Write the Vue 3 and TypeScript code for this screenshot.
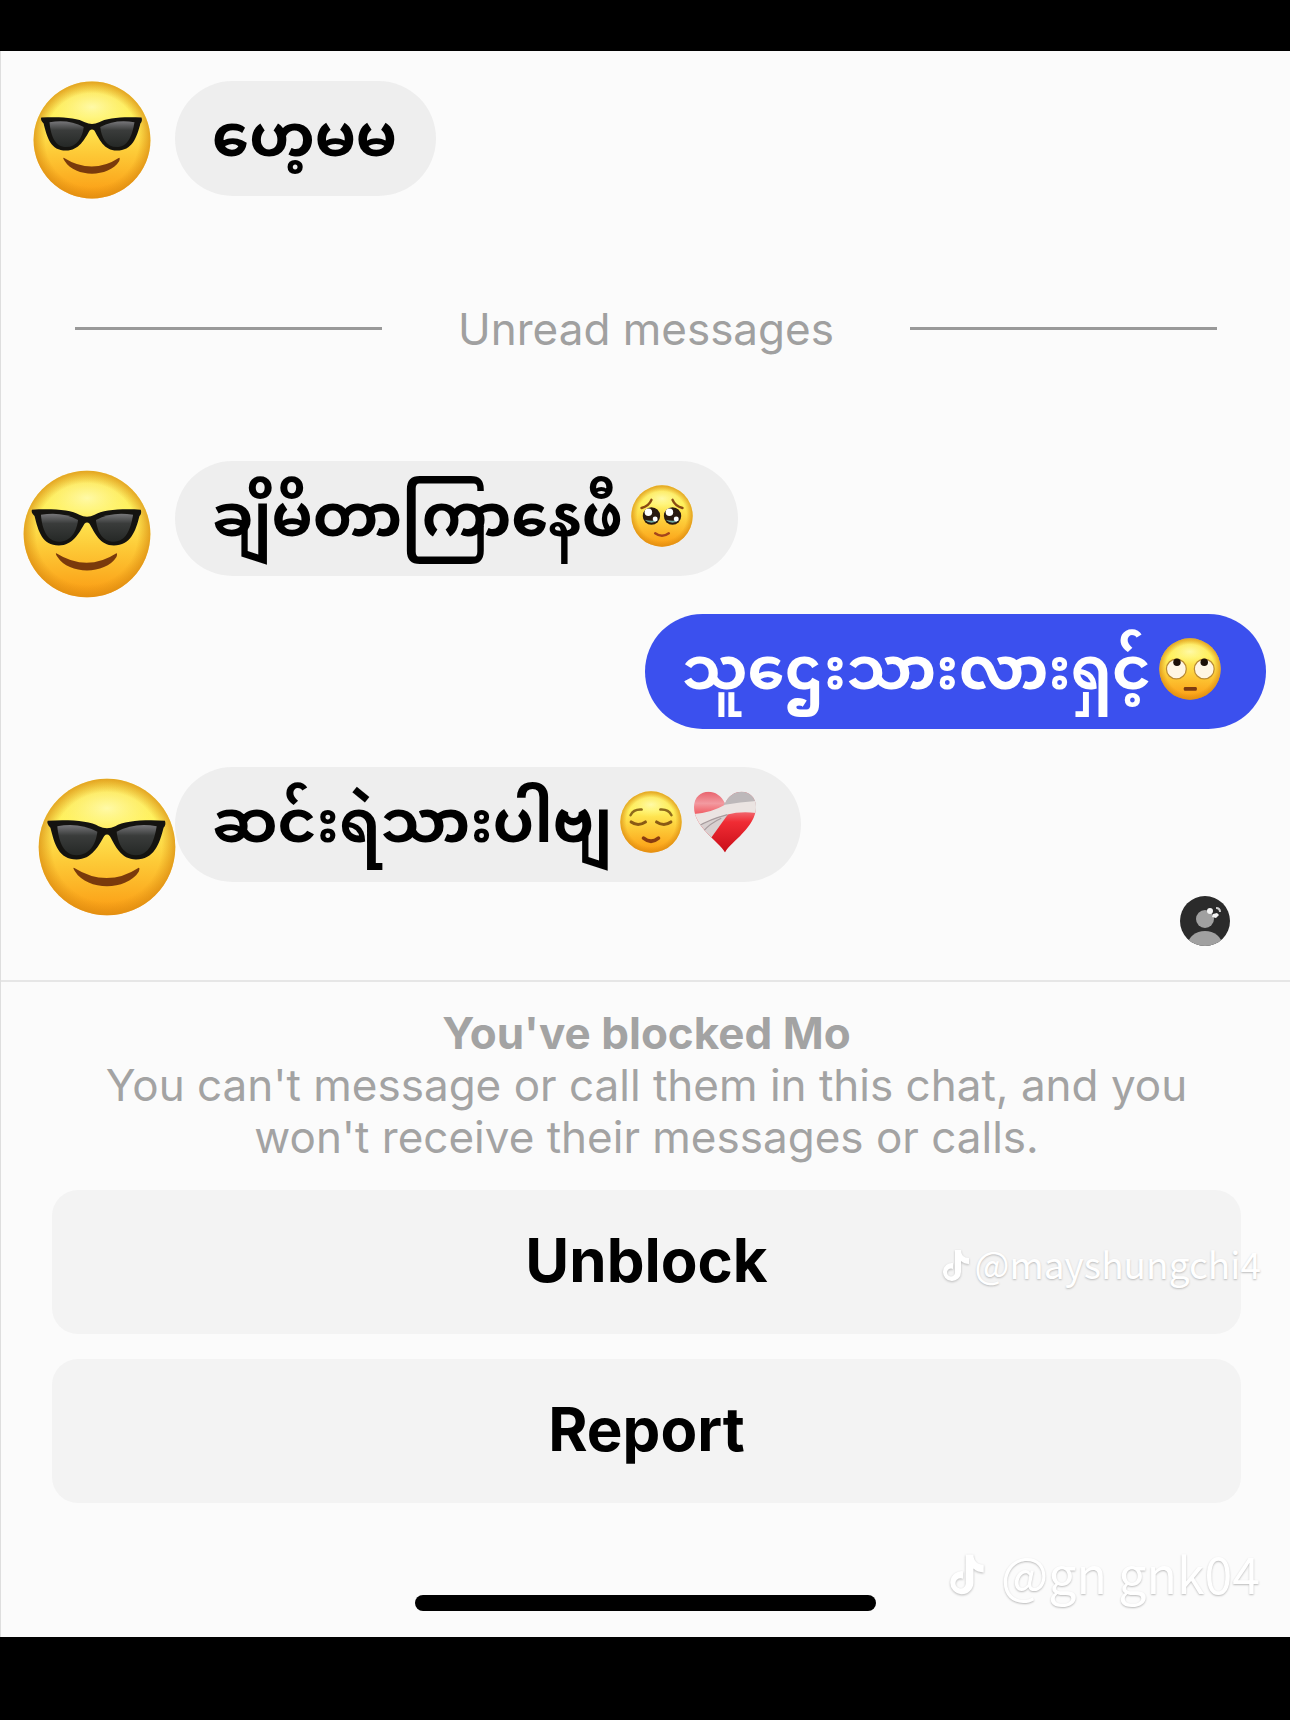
<script setup lang="ts">
type EmojiName = 'pleading' | 'eyeroll' | 'relieved' | 'heart'

interface Message {
  id: number
  text: string
  mine: boolean
  avatar?: 'small' | 'medium' | 'large'
  emojis: EmojiName[]
}

const readMessages: Message[] = [
  { id: 1, text: 'ဟေ့မမ', mine: false, avatar: 'small', emojis: [] },
]

const unreadMessages: Message[] = [
  { id: 2, text: 'ချိမိတာကြာနေဖီ', mine: false, avatar: 'medium', emojis: ['pleading'] },
  { id: 3, text: 'သူဌေးသားလားရှင့်', mine: true, emojis: ['eyeroll'] },
  { id: 4, text: 'ဆင်းရဲသားပါဗျ', mine: false, avatar: 'large', emojis: ['relieved', 'heart'] },
]

const groups = [
  { key: 'read', messages: readMessages },
  { key: 'unread', messages: unreadMessages },
]
</script>

<template>
  <div class="page">
    <svg class="defs" width="0" height="0" aria-hidden="true">
      <defs>
        <linearGradient id="skin" x1="0" y1="0" x2="0" y2="1">
          <stop offset="0" stop-color="#fbe04a" />
          <stop offset="0.3" stop-color="#fff25e" />
          <stop offset="0.6" stop-color="#fdcb38" />
          <stop offset="1" stop-color="#fb9a12" />
        </linearGradient>
        <radialGradient id="rim" cx="0.5" cy="0.5" r="0.5">
          <stop offset="0.8" stop-color="#d98a10" stop-opacity="0" />
          <stop offset="1" stop-color="#d98a10" stop-opacity="0.7" />
        </radialGradient>
        <radialGradient id="shine" cx="0.5" cy="0.5" r="0.5">
          <stop offset="0" stop-color="#fffbb0" stop-opacity="0.9" />
          <stop offset="1" stop-color="#fff68a" stop-opacity="0" />
        </radialGradient>
        <linearGradient id="lens" x1="0" y1="0" x2="0" y2="1">
          <stop offset="0" stop-color="#77777a" />
          <stop offset="0.35" stop-color="#3a3c3b" />
          <stop offset="1" stop-color="#252826" />
        </linearGradient>
        <linearGradient id="red" x1="0" y1="0" x2="0" y2="1">
          <stop offset="0" stop-color="#e8606a" />
          <stop offset="0.2" stop-color="#f29aa0" />
          <stop offset="0.5" stop-color="#f02c34" />
          <stop offset="1" stop-color="#c80d18" />
        </linearGradient>
        <symbol id="face" viewBox="0 0 100 100">
          <circle cx="50" cy="50" r="49.5" fill="url(#skin)" />
          <ellipse cx="50" cy="22" rx="36" ry="20" fill="url(#shine)" />
          <circle cx="50" cy="50" r="49.5" fill="url(#rim)" />
        </symbol>
        <symbol id="cool" viewBox="0 0 100 100">
          <use href="#face" />
          <path d="M7 31 C22 30 38 31 44 35 Q50 38 56 35 C62 31 78 30 92 31 Q93 34 91 36 C88 48 84 59 71 59 C60 59 56 49 52 42 Q50 40 48 42 C44 49 39 59 28 59 C15 59 12 48 9 36 Q6 33 7 31Z" fill="#141310" />
          <path d="M14 35 Q30 32 43 39 C42 48 37 56 28 56 C19 56 15 47 14 35Z" fill="url(#lens)" />
          <path d="M86 35 Q70 32 57 39 C58 48 62 56 71 56 C80 56 84 47 86 35Z" fill="url(#lens)" />
          <path d="M26 65 Q50 80 73 65 Q74 65 73 68 C64 82 36 82 27 68Q25 65 26 65Z" fill="#7a3a0c" />
        </symbol>
        <symbol id="pleading" viewBox="0 0 100 100">
          <use href="#face" />
          <path d="M17 37 Q29 34 33 24 M83 37 Q71 34 67 24" fill="none" stroke="#8a4a12" stroke-width="4" stroke-linecap="round" />
          <circle cx="33" cy="50" r="14" fill="#2a1a10" />
          <circle cx="67" cy="50" r="14" fill="#2a1a10" />
          <path d="M22 56 Q33 66 44 56 Q33 59 22 56Z M56 56 Q67 66 78 56 Q67 59 56 56Z" fill="#6fa8a0" />
          <circle cx="28" cy="44" r="6" fill="#fff" />
          <circle cx="62" cy="44" r="6" fill="#fff" />
          <circle cx="39" cy="55" r="4" fill="#fff" />
          <circle cx="73" cy="55" r="4" fill="#fff" />
          <path d="M39 78 Q50 86 61 78" fill="none" stroke="#a4441c" stroke-width="4" stroke-linecap="round" />
        </symbol>
        <symbol id="eyeroll" viewBox="0 0 100 100">
          <use href="#face" />
          <circle cx="28" cy="50" r="16" fill="#fff6e4" stroke="#b98a34" stroke-width="2" />
          <circle cx="73" cy="50" r="16" fill="#fff6e4" stroke="#b98a34" stroke-width="2" />
          <circle cx="29" cy="39" r="6" fill="#1c1008" />
          <circle cx="73" cy="39" r="6" fill="#1c1008" />
          <rect x="40" y="79" width="21" height="6" rx="2" fill="#7c3a10" />
        </symbol>
        <symbol id="relieved" viewBox="0 0 100 100">
          <use href="#face" />
          <path d="M17 39 Q22 29 35 30 M83 39 Q78 29 65 30" fill="none" stroke="#8f6a1c" stroke-width="4" stroke-linecap="round" />
          <path d="M18 50 Q29 58 41 50 M59 50 Q71 58 82 50" fill="none" stroke="#8a5a14" stroke-width="5" stroke-linecap="round" />
          <path d="M38 76 Q50 86 62 76" fill="none" stroke="#8a3c10" stroke-width="6" stroke-linecap="round" />
        </symbol>
        <symbol id="heart" viewBox="0 0 100 100">
          <clipPath id="heart-shape">
            <path d="M50 99 C40 82 0 58 0 26 C0 -4 38 -8 50 20 C62 -8 100 -4 100 26 C100 58 60 82 50 99Z" />
          </clipPath>
          <g clip-path="url(#heart-shape)">
            <rect width="100" height="100" fill="url(#red)" />
            <path d="M48 22 L56 -4 L104 -4 L104 30 L52 34Z" fill="#bdb8ba" />
            <path d="M4 56 L56 36 L26 78 L10 70Z" fill="#d8d0d0" />
            <path d="M-2 37 Q26 36 50 22 Q76 18 104 16 L104 36 Q76 32 54 38 Q24 46 8 58Z" fill="#ebe4e2" />
            <path d="M7 57 Q24 46 54 38 M14 66 Q26 52 44 44" fill="none" stroke="#a79c9e" stroke-width="2" />
          </g>
        </symbol>
      </defs>
    </svg>

    <main class="screen">
      <section class="chat">
        <template v-for="group in groups" :key="group.key">
          <div v-if="group.key === 'unread'" class="divider">
            <span class="rule"></span>
            <span class="divider-label">Unread messages</span>
            <span class="rule"></span>
          </div>
          <ul class="messages">
            <li v-for="m in group.messages" :key="m.id" class="row" :class="{ mine: m.mine }">
              <div v-if="m.avatar" class="slot">
                <svg class="avatar" :class="m.avatar" role="img" aria-label="Mo"><use href="#cool" /></svg>
              </div>
              <div class="bubble" :class="{ plain: !m.emojis.length }">
                <span class="text" lang="my">{{ m.text }}</span>
                <svg v-for="e in m.emojis" :key="e" class="emoji" aria-hidden="true"><use :href="'#' + e" /></svg>
              </div>
            </li>
          </ul>
        </template>
        <div class="seen">
          <svg class="seen-avatar" viewBox="0 0 50 50" role="img" aria-label="Seen">
            <clipPath id="seen-clip"><circle cx="25" cy="25" r="25" /></clipPath>
            <g clip-path="url(#seen-clip)">
              <rect width="50" height="50" fill="#2b2b2b" />
              <circle cx="25" cy="23" r="9" fill="#a0a0a0" />
              <ellipse cx="25" cy="49" rx="17" ry="14" fill="#a0a0a0" />
              <circle cx="30" cy="15" r="3" fill="#f4f4f4" />
              <path d="M33 18 l4 -1 l2 2 l-3 3 l-4 -1z" fill="#f4f4f4" />
              <path d="M36 12 q4 0 4 4" fill="none" stroke="#cfcfcf" stroke-width="2" />
            </g>
          </svg>
        </div>
      </section>

      <section class="blocked">
        <h1>You've blocked Mo</h1>
        <p>You can't message or call them in this chat, and you won't receive their messages or calls.</p>
        <div class="actions">
          <div class="action">
            <button type="button">Unblock</button>
            <div class="watermark">
              <svg class="note" viewBox="0 0 28 34" aria-hidden="true">
                <path d="M13 1h6c0 5 3 8 8 8v6c-3 0-6-1-8-3v11a9 9 0 1 1-8-9v6a4 4 0 1 0 2 3z" />
              </svg>
              <span>@mayshungchi4</span>
            </div>
          </div>
          <div class="action">
            <button type="button">Report</button>
          </div>
        </div>
      </section>

      <footer class="bottom">
        <div class="home"></div>
        <div class="watermark faint">
          <svg class="note" viewBox="0 0 28 34" aria-hidden="true">
            <path d="M13 1h6c0 5 3 8 8 8v6c-3 0-6-1-8-3v11a9 9 0 1 1-8-9v6a4 4 0 1 0 2 3z" />
          </svg>
          <span>@gn gnk04</span>
        </div>
      </footer>
    </main>
  </div>
</template>

<style>
body {
  margin: 0;
  background: #000;
}
</style>

<style scoped>
.page {
  padding: 51px 0 83px;
  background: #000;
  font-family: Inter, "Liberation Sans", sans-serif;
}

.defs {
  position: absolute;
}

.screen {
  box-sizing: border-box;
  border-left: 1px solid #dedede;
  background: #fbfbfb;
}

.chat {
  padding: 30px 24px 34px 0;
}

.messages {
  display: flex;
  flex-direction: column;
  gap: 38px;
  margin: 0;
  padding: 0;
  list-style: none;
}

.row {
  display: flex;
  height: 115px;
}

.mine {
  justify-content: flex-end;
}

.slot {
  flex: none;
  width: 174px;
}

.avatar {
  display: block;
}

.small {
  width: 118px;
  height: 118px;
  margin-left: 32px;
}

.medium {
  width: 128px;
  height: 128px;
  margin: 9px 0 0 22px;
}

.large {
  width: 138px;
  height: 138px;
  margin: 11px 0 0 37px;
}

.bubble {
  display: flex;
  align-items: center;
  gap: 8px;
  padding: 0 45px 0 37px;
  border-radius: 58px;
  background: #eee;
  color: #000;
}

.plain {
  padding-right: 39px;
}

.mine .bubble {
  background: #3b50ee;
  color: #fff;
}

.text {
  padding-top: 8px;
  font-family: "Noto Sans Myanmar", "Noto Sans", sans-serif;
  font-size: 59px;
  font-weight: 700;
  line-height: 107px;
  white-space: nowrap;
}

.emoji {
  flex: none;
  width: 62px;
  height: 62px;
  margin-bottom: 6px;
}

.emoji + .emoji {
  margin-left: 4px;
}

.divider {
  display: flex;
  align-items: center;
  justify-content: space-between;
  height: 265px;
  padding: 0 49px 0 74px;
}

.rule {
  width: 307px;
  height: 3px;
  background: #999;
}

.divider-label {
  color: #a0a0a0;
  font-size: 44px;
  line-height: 52px;
}

.seen {
  display: flex;
  justify-content: flex-end;
  padding: 14px 36px 0 0;
}

.seen-avatar {
  width: 50px;
  height: 50px;
}

.blocked {
  padding: 25px 49px 0 51px;
  border-top: 2px solid #e6e6e6;
  color: #a3a3a3;
  font-size: 44px;
  line-height: 52px;
  text-align: center;
}

h1 {
  margin: 0;
  font-size: 44px;
  font-weight: 700;
  line-height: 52px;
}

p {
  margin: 0;
  padding: 0 40px;
}

.actions {
  display: flex;
  flex-direction: column;
  gap: 25px;
  margin-top: 27px;
}

.action {
  position: relative;
}

button {
  display: block;
  width: 100%;
  height: 144px;
  padding: 0 0 4px;
  border: 0;
  border-radius: 26px;
  background: #f3f3f3;
  color: #000;
  font-family: inherit;
  font-size: 60px;
  font-weight: 700;
}

.watermark {
  position: absolute;
  top: 47px;
  right: -20px;
  display: flex;
  align-items: center;
  gap: 4px;
  color: #fff;
  font-family: "Noto Sans CJK SC", "Noto Sans", sans-serif;
  font-size: 37px;
  line-height: 52px;
  text-shadow: 0 1px 2px #bbb;
}

.note {
  width: 28px;
  height: 34px;
  padding-top: 6px;
  fill: #fff;
  filter: drop-shadow(0 1px 1px #bbb);
}

.bottom {
  position: relative;
  padding: 92px 0 26px;
}

.home {
  width: 461px;
  height: 16px;
  margin: 0 auto;
  border-radius: 8px;
  background: #000;
}

.faint {
  top: 43px;
  right: 30px;
  gap: 16px;
  font-size: 50px;
}

.faint .note {
  width: 36px;
  height: 44px;
}
</style>
